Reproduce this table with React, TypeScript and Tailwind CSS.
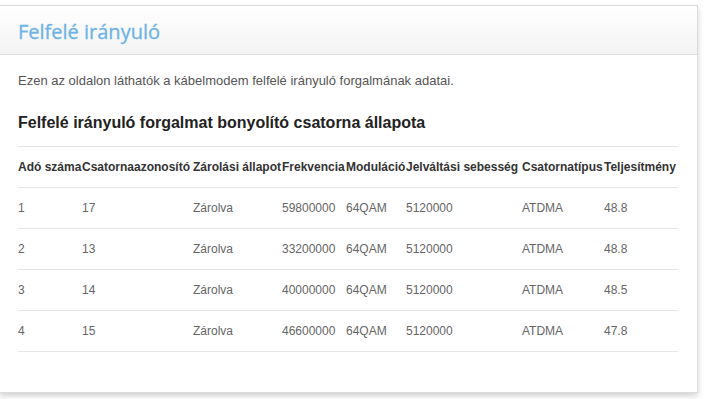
const rows = [
  ["1", "17", "Zárolva", "59800000", "64QAM", "5120000", "ATDMA", "48.8"],
  ["2", "13", "Zárolva", "33200000", "64QAM", "5120000", "ATDMA", "48.8"],
  ["3", "14", "Zárolva", "40000000", "64QAM", "5120000", "ATDMA", "48.5"],
  ["4", "15", "Zárolva", "46600000", "64QAM", "5120000", "ATDMA", "47.8"],
];

const headers = [
  "Adó száma",
  "Csatornaazonosító",
  "Zárolási állapot",
  "Frekvencia",
  "Moduláció",
  "Jelváltási sebesség",
  "Csatornatípus",
  "Teljesítmény",
];

const widths = ["w-[64px]", "w-[111px]", "w-[89px]", "w-[64px]", "w-[60px]", "w-[116px]", "w-[82px]", "w-[74px]"];

export default function App() {
  return (
    <div className="w-[705px] h-[399px] bg-white overflow-hidden pt-[5px] font-['Liberation_Sans',Arial,sans-serif]">
      <div className="-ml-px w-[699px] h-[388px] border border-[#dcdcdc] bg-white shadow-[0_3px_6px_rgba(0,0,0,0.18)]">
        {/* Header */}
        <div className="h-[49px] border-b border-[#dedede] bg-gradient-to-b from-white to-[#f3f3f3] pl-[18px] flex items-center">
          <h1 className="text-[20px] text-[#6db3e6] font-['Open_Sans',sans-serif] pt-[4px] [-webkit-text-stroke:0.3px_#6db3e6]">
            Felfelé irányuló
          </h1>
        </div>

        <div className="pl-[18px] pr-[21px]">
          <p className="mt-[16px] text-[13px] text-[#555]">
            Ezen az oldalon láthatók a kábelmodem felfelé irányuló forgalmának adatai.
          </p>
          <h2 className="mt-[20px] text-[16px] leading-[24px] font-bold text-[#222]">
            Felfelé irányuló forgalmat bonyolító csatorna állapota
          </h2>

          <table className="mt-[11px] w-[660px] table-fixed border-collapse text-[12px]">
            <colgroup>
              {widths.map((w, i) => (
                <col key={i} className={w} />
              ))}
            </colgroup>
            <thead>
              <tr className="h-[41px] border-t border-b border-[#e6e6e6]">
                {headers.map((h) => (
                  <th key={h} className="text-left font-bold text-[#333] whitespace-nowrap p-0">
                    {h}
                  </th>
                ))}
              </tr>
            </thead>
            <tbody>
              {rows.map((r) => (
                <tr key={r[0]} className="h-[41px] border-b border-[#e6e6e6]">
                  {r.map((c, i) => (
                    <td key={i} className="text-left text-[#666] whitespace-nowrap p-0">
                      {c}
                    </td>
                  ))}
                </tr>
              ))}
            </tbody>
          </table>
        </div>
      </div>
    </div>
  );
}
